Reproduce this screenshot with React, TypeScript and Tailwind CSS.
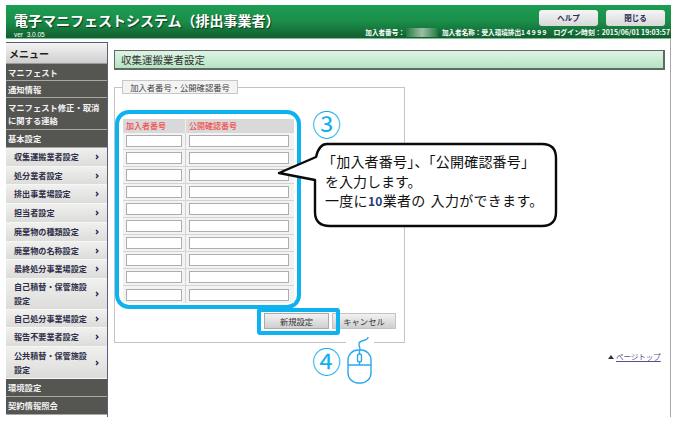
const font = { fontFamily: '"Noto Sans CJK JP", "Liberation Sans", sans-serif' };

function DarkItem({ children, h }: { children: React.ReactNode; h: string }) {
  return (
    <div className={`${h} flex items-center bg-[#555552] border-b border-[#a8a8a4] pl-[2px] text-[8.3px] leading-[13px] font-bold text-[#f2f2f2]`}>
      <span>{children}</span>
    </div>
  );
}

function SubItem({ lines, h }: { lines: string[]; h: string }) {
  return (
    <div className={`${h} flex items-center justify-between bg-gradient-to-b from-[#f0f0ef] to-[#dcdcda] border-b border-[#f6f6f6] pl-[8px] pr-[8px] text-[8.1px] leading-[14px] font-bold text-[#2e2e48]`}>
      <span>
        {lines.map((l) => (
          <span key={l} className="block whitespace-nowrap">{l}</span>
        ))}
      </span>
      <svg width="4" height="6" viewBox="0 0 4 6" fill="none" stroke="#26265a" strokeWidth="1.3">
        <path d="M1 1 L3 3 L1 5" />
      </svg>
    </div>
  );
}

function Row({ last }: { last?: boolean }) {
  return (
    <div className={`flex h-[17px] bg-[#f3f3f3] ${last ? "" : "border-b border-[#d4d4d4]"}`}>
      <div className="w-[63px] flex items-center border-r border-[#d4d4d4] pl-[3px]">
        <div className="w-[56px] h-[12px] bg-white border border-[#adadad]" />
      </div>
      <div className="flex-1 flex items-center pl-[3px]">
        <div className="w-[100px] h-[12px] bg-white border border-[#adadad]" />
      </div>
    </div>
  );
}

export default function App() {
  return (
    <div style={font} className="w-[678px] h-[426px] bg-white overflow-hidden pl-[6px] pt-[5px] text-[#333]">
      <header className="w-[665px] h-[34px] flex justify-between bg-gradient-to-b from-[#1d9d54] via-[#1a8e49] to-[#115e2f] border-b border-[#7cc292]">
        <div className="pl-[8px] pt-[6px]">
          <div className="text-[14px] leading-[19px] font-bold text-white whitespace-nowrap [text-shadow:1px_1px_1px_#0b3d1d]">電子マニフェストシステム（排出事業者）</div>
          <div className="text-[6.5px] leading-[8px] text-white mt-[1px]" style={{ fontFamily: '"Liberation Sans", sans-serif' }}>ver&nbsp; 3.0.05</div>
        </div>
        <div className="flex flex-col items-end pr-[1px]">
          <div className="flex gap-[8px] pt-[5px] pr-[5px]">
            <div className="w-[59px] h-[16px] rounded-[3px] bg-gradient-to-b from-[#f6f6f6] to-[#d8d8d8] flex items-center justify-center text-[7.5px] font-bold text-[#2a2a55]">ヘルプ</div>
            <div className="w-[59px] h-[16px] rounded-[3px] bg-gradient-to-b from-[#f6f6f6] to-[#d8d8d8] flex items-center justify-center text-[7.5px] font-bold text-[#2a2a55]">閉じる</div>
          </div>
          <div className="flex items-center text-[6.6px] leading-[10px] font-bold text-white mt-[1px] whitespace-nowrap">
            <span>加入者番号：</span>
            <span className="w-[32px] h-[9px] bg-gradient-to-r from-[#1a7a40] via-[#9dbfa8] to-[#1a7a40] mx-[1px]" />
            <span className="ml-[3px]">加入者名称：受入環境排出1 4 9 9 9</span>
            <span className="ml-[7px] text-[6.9px]">ログイン時刻：2015/06/01 19:03:57</span>
          </div>
        </div>
      </header>

      <div className="flex w-[665px] h-[378px]">
        <nav className="w-[102px] mt-[3px] h-[375px] border-t border-r border-[#5b5f75] shrink-0">
          <div className="h-[21px] flex items-center pl-[3px] bg-gradient-to-b from-[#f4f4f4] to-[#cfcfcf] border-b border-[#999] text-[10px] font-bold text-[#222]">メニュー</div>
          <DarkItem h="h-[17px]">マニフェスト</DarkItem>
          <DarkItem h="h-[17px]">通知情報</DarkItem>
          <DarkItem h="h-[32px]">マニフェスト修正・取消<br />に関する連絡</DarkItem>
          <DarkItem h="h-[18px]">基本設定</DarkItem>
          <SubItem h="h-[19px]" lines={["収集運搬業者設定"]} />
          <SubItem h="h-[18px]" lines={["処分業者設定"]} />
          <SubItem h="h-[19px]" lines={["排出事業場設定"]} />
          <SubItem h="h-[19px]" lines={["担当者設定"]} />
          <SubItem h="h-[19px]" lines={["廃棄物の種類設定"]} />
          <SubItem h="h-[18px]" lines={["廃棄物の名称設定"]} />
          <SubItem h="h-[19px]" lines={["最終処分事業場設定"]} />
          <SubItem h="h-[31px]" lines={["自己積替・保管施設", "設定"]} />
          <SubItem h="h-[18px]" lines={["自己処分事業場設定"]} />
          <SubItem h="h-[19px]" lines={["報告不要業者設定"]} />
          <SubItem h="h-[32px]" lines={["公共積替・保管施設", "設定"]} />
          <DarkItem h="h-[18px]">環境設定</DarkItem>
          <DarkItem h="h-[18px]">契約情報照会</DarkItem>
        </nav>

        <main className="relative flex-1 h-[378px] border-r border-[#a8a8a8] pl-[6px] pr-[5px] pt-[11px]">
          <div className="h-[20px] flex items-center pl-[6px] bg-gradient-to-b from-[#dff3e4] to-[#b6e4c4] border border-[#5f6b62] border-r-2 border-b-2 text-[10.5px] text-[#333]">収集運搬業者設定</div>

          <fieldset className="relative w-[291px] h-[263px] mt-[10px] border border-[#c4c4c4]">
            <legend className="ml-[7px] w-[116px] h-[14px] flex items-center justify-center bg-[#f3f3f3] border border-[#c8c8c8] text-[8.3px] leading-none text-[#444]">加入者番号・公開確認番号</legend>

            <div className="mt-[16px] w-[186px] h-[199px] border-4 border-[#0db2ee] rounded-[14px] pt-[5px] pl-[4px]">
              <div className="w-[171px]">
                <div className="flex h-[14px] bg-[#d9d9d9] text-[8px] leading-[14px] font-medium text-[#f04c4c]">
                  <div className="w-[63px] pl-[3px] border-r border-[#efefef]">加入者番号</div>
                  <div className="pl-[3px]">公開確認番号</div>
                </div>
                {Array.from({ length: 10 }).map((_, i) => (
                  <Row key={i} last={i === 9} />
                ))}
              </div>
            </div>

            <div className="flex gap-[3px] mt-[4px] ml-[149px]">
              <div className="relative w-[65px] h-[16px] flex items-center justify-center bg-gradient-to-b from-[#f2f2f2] to-[#cfcfcf] border border-[#aaa] text-[8.3px] text-[#333]">
                新規設定
                <div className="absolute left-[-8px] top-[-6px] w-[83px] h-[27px] border-4 border-[#0db2ee] rounded-[3px]" />
              </div>
              <div className="w-[64px] h-[16px] flex items-center justify-center bg-gradient-to-b from-[#f2f2f2] to-[#cfcfcf] border border-[#c4c4c4] text-[8.3px] text-[#333]">キャンセル</div>
            </div>
          </fieldset>

          <div className="absolute left-[500px] top-[312px] flex items-center gap-[2px] text-[7.5px] leading-[12px] text-[#54548c]">
            <span className="w-0 h-0 border-x-[3px] border-x-transparent border-b-[4px] border-b-[#333]" />
            <span className="underline whitespace-nowrap">ページトップ</span>
          </div>

          {/* ③ marker */}
          <div className="absolute left-[204px] top-[66px] text-[29px] leading-[36px] text-[#12b1ee]">③</div>
          {/* ④ marker */}
          <div className="absolute left-[204px] top-[303px] text-[29px] leading-[36px] text-[#12b1ee]">④</div>

          {/* speech balloon */}
          <svg className="absolute left-[169px] top-[100px]" width="282" height="92" viewBox="0 0 282 92" fill="none">
            <path
              d="M50 5 H265 Q279 5 279 19 V73 Q279 87 265 87 H53 Q38 87 38 73 V41 L2 34 L39 18 Q42 5 50 5 Z"
              fill="#fff"
              stroke="#0a0a0a"
              strokeWidth="2.4"
              strokeLinejoin="round"
            />
          </svg>
          <div className="absolute left-[214px] top-[113px] w-[230px] text-[14px] leading-[19.6px] text-[#111] whitespace-nowrap">
            <div className="tracking-[0.2px]">「加入者番号」、「公開確認番号」</div>
            <div className="pl-[3px]">を入力します。</div>
            <div className="pl-[3px] tracking-[0.3px]">一度に<span className="text-[12px] font-bold text-[#1a3c78]">10</span>業者の<span className="ml-[5px]">入力ができます。</span></div>
          </div>

          {/* mouse */}
          <svg className="absolute left-[238px] top-[294px]" width="30" height="54" viewBox="0 0 30 54" fill="none" stroke="#2aa8ee" strokeWidth="1.4">
            <rect x="0" y="5" width="28" height="6" fill="#fff" stroke="none" />
            <path d="M22 4 C22 9 13 6 13 11 C13 14 14 14 14 17" />
            <rect x="2" y="17" width="23" height="33" rx="10" fill="#fff" />
            <path d="M2 32 H25 M13.5 17 V32" />
            <rect x="11.5" y="21" width="4" height="8" rx="2" fill="#fff" />
          </svg>
        </main>
      </div>
    </div>
  );
}
